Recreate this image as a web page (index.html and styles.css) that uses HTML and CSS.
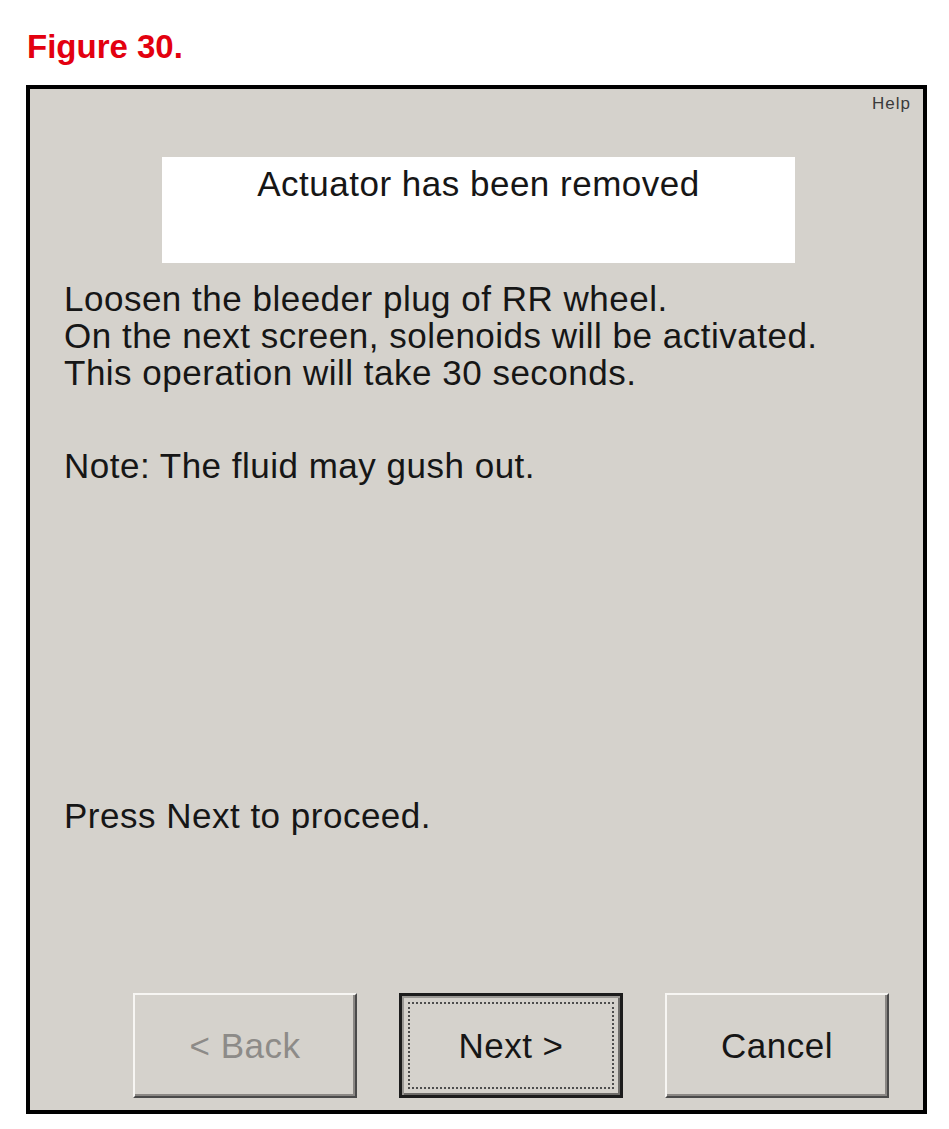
FILE: index.html
```html
<!DOCTYPE html>
<html lang="en">
<head>
    <meta charset="UTF-8">
    <meta name="viewport" content="width=device-width, initial-scale=1.0">
    <title>Figure 30</title>
    <link rel="stylesheet" href="styles.css">
</head>
<body>

<div class="page">
    <h1 class="figure-title">Figure 30.</h1>

    <div class="dialog">
        <div class="help">Help</div>

        <div class="banner">Actuator has been removed</div>

        <div class="instructions">
            <p class="step">
                Loosen the bleeder plug of RR wheel.<br>
                On the next screen, solenoids will be activated.<br>
                This operation will take 30 seconds.
            </p>
            <p class="note">Note: The fluid may gush out.</p>
            <p class="proceed">Press Next to proceed.</p>
        </div>

        <div class="buttons">
            <button class="btn btn-disabled" disabled>&lt; Back</button>
            <button class="btn btn-default">Next &gt;</button>
            <button class="btn">Cancel</button>
        </div>
    </div>
</div>

</body>
</html>
```

FILE: styles.css
```css
/* General Reset */
* {
    margin: 0;
    padding: 0;
    box-sizing: border-box;
}

body {
    font-family: "Liberation Sans", Arial, sans-serif;
    background-color: #ffffff;
    color: #161616;
}

.page {
    padding: 30px 22px 15px 26px;
}

/* Figure caption */
.figure-title {
    font-size: 33px;
    line-height: 33px;
    font-weight: bold;
    color: #e3000f;
    padding-left: 1px;
}

/* Dialog window */
.dialog {
    margin-top: 22px;
    width: 901px;
    height: 1029px;
    border: 4px solid #000;
    background-color: #d5d2cc;
    display: flex;
    flex-direction: column;
}

.help {
    height: 68px;
    padding: 5px 12px 0 0;
    text-align: right;
    font-size: 17px;
    line-height: 20px;
    letter-spacing: 1px;
    color: #3a3a3a;
}

/* White message box */
.banner {
    margin-left: 132px;
    width: 633px;
    height: 106px;
    padding-top: 8px;
    background-color: #ffffff;
    text-align: center;
    font-size: 35px;
    line-height: 37px;
    letter-spacing: 0.5px;
}

/* Instruction text */
.instructions {
    padding-left: 34px;
    font-size: 35px;
    line-height: 37px;
    letter-spacing: 0.5px;
}

.step {
    margin-top: 17px;
}

.note {
    margin-top: 56px;
}

.proceed {
    margin-top: 313px;
}

/* Buttons */
.buttons {
    margin-top: auto;
    padding: 0 0 12px 103px;
    display: flex;
    gap: 42px;
}

.btn {
    width: 224px;
    height: 105px;
    font-family: "Liberation Sans", Arial, sans-serif;
    font-size: 35px;
    letter-spacing: 0.5px;
    color: #161616;
    background-color: #d5d2cc;
    border: 2px solid;
    border-color: #f7f6f3 #4a4a4a #4a4a4a #f7f6f3;
    box-shadow: inset -2px -2px 0 #8a8784;
    cursor: pointer;
}

.btn-disabled {
    color: #8d8b88;
    cursor: default;
}

.btn-default {
    border: 3px solid #1c1c1c;
    box-shadow: inset 2px 2px 0 #9a9894, inset -2px -2px 0 #6e6c69;
    outline: 2px dotted #4d4d4d;
    outline-offset: -11px;
}
```
